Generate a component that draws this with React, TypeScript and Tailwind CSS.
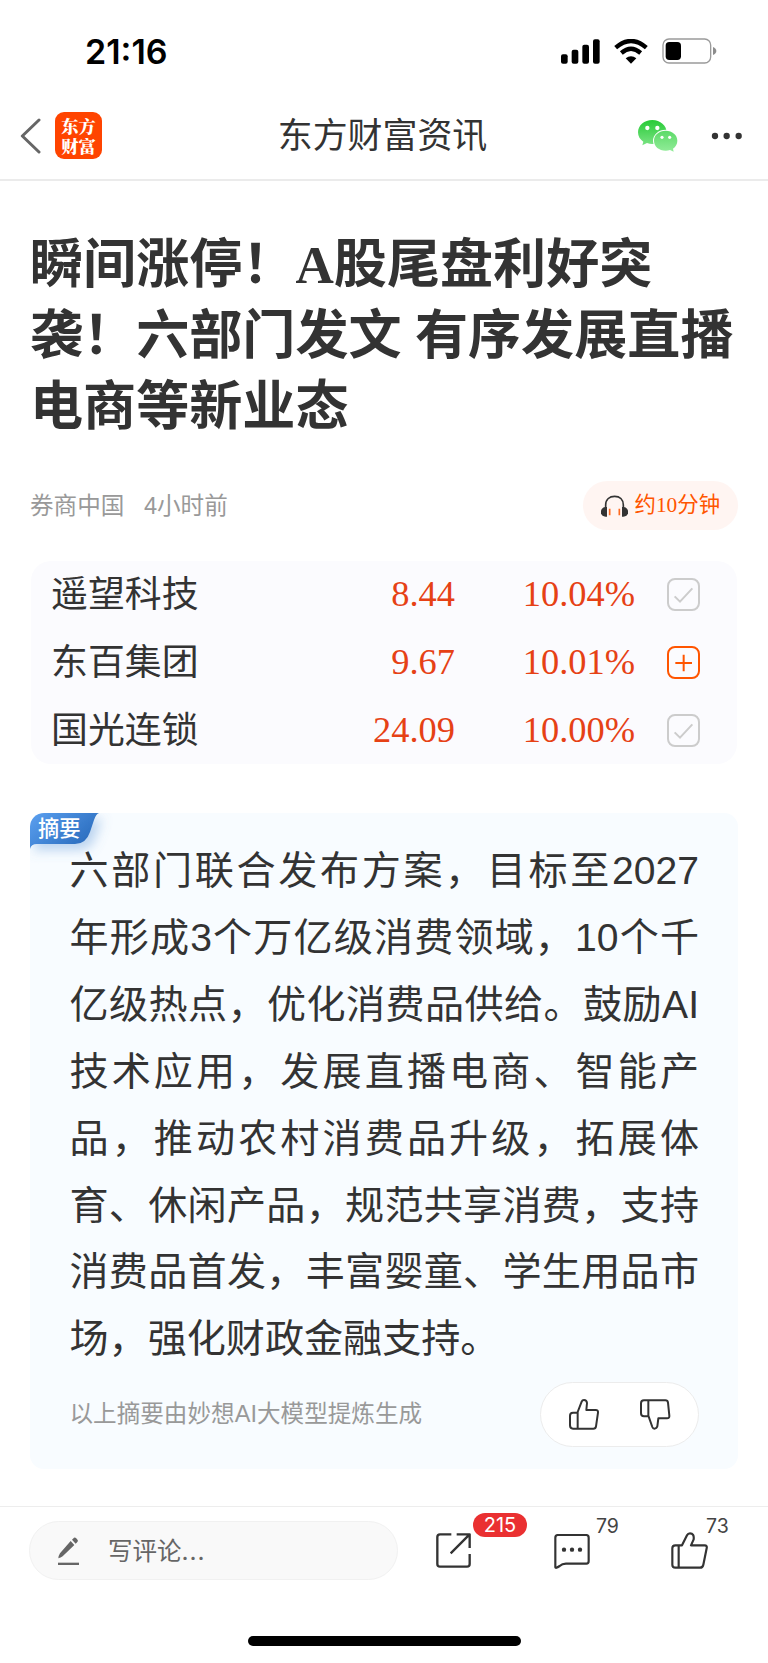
import { clsx } from "clsx";

const stocks = [
  { name: "遥望科技", price: "8.44", change: "10.04%", added: true },
  { name: "东百集团", price: "9.67", change: "10.01%", added: false },
  { name: "国光连锁", price: "24.09", change: "10.00%", added: true },
];

const titleLines = [
  "瞬间涨停！A股尾盘利好突",
  "袭！六部门发文 有序发展直播",
  "电商等新业态",
];

const summaryLines = [
  "六部门联合发布方案，目标至2027",
  "年形成3个万亿级消费领域，10个千",
  "亿级热点，优化消费品供给。鼓励AI",
  "技术应用，发展直播电商、智能产",
  "品，推动农村消费品升级，拓展体",
  "育、休闲产品，规范共享消费，支持",
  "消费品首发，丰富婴童、学生用品市",
  "场，强化财政金融支持。",
];

const sans = "font-['Liberation_Sans','Noto_Sans_CJK_SC',sans-serif]";
const serif = "font-['Liberation_Serif','Noto_Sans_CJK_SC',serif]";
const inter = "font-['Inter','Noto_Sans_CJK_SC',sans-serif]";

function StatusBar() {
  return (
    <div className="flex h-[92px] items-center justify-between pt-[10px] pr-[51px] pl-[85px]">
      <span className={clsx(inter, "pt-px text-[34px] leading-none font-semibold text-black")}>
        21:16
      </span>
      <div className="flex items-center">
        <svg className="mr-[14px] h-[25px] w-[39px]" viewBox="0 0 117 75">
          <rect x="0" y="46" width="20" height="28" rx="6" />
          <rect x="32" y="32" width="20" height="42" rx="6" />
          <rect x="64" y="17" width="20" height="57" rx="6" />
          <rect x="96" y="1" width="20" height="73" rx="6" />
        </svg>
        <svg className="mr-[14px] h-[25px] w-[34px]" viewBox="0 0 102 75">
          <path
            d="M5 26Q51 -14 97 26M22 42Q51 17 80 42"
            fill="none"
            stroke="#000"
            strokeWidth="13"
          />
          <path d="M35 58Q51 46 67 58L51 74Z" />
        </svg>
        <svg className="h-[26px] w-[55px]" viewBox="0 0 165 78">
          <rect x="3" y="3" width="143" height="72" rx="18" fill="none" stroke="#9a9a9a" strokeWidth="4" />
          <rect x="11" y="12" width="46" height="54" rx="11" />
          <path d="M153 27Q163 31 163 39T153 51Z" fill="#8c8c8c" />
        </svg>
      </div>
    </div>
  );
}

function WechatIcon() {
  return (
    <svg className="h-8 w-10" viewBox="0 0 120 96">
      <defs>
        <linearGradient id="wechat-back" x1="0" y1="0" x2="0" y2="1">
          <stop offset="0" stopColor="#28cb37" />
          <stop offset="1" stopColor="#7be384" />
        </linearGradient>
        <linearGradient id="wechat-front" x1="0" y1="0" x2="0" y2="1">
          <stop offset="0" stopColor="#5cda68" />
          <stop offset="1" stopColor="#92ec99" />
        </linearGradient>
      </defs>
      <path
        d="M43 0C19 0 0 16 0 37c0 12 6 22 16 28l-3 11 14-7c5 2 10 3 16 3 24 0 43-15 43-35S67 0 43 0Z"
        fill="url(#wechat-back)"
      />
      <ellipse cx="83" cy="62" rx="38" ry="33" fill="#fff" />
      <path
        d="M83 32C63 32 48 45 48 62s15 30 35 30c5 0 9-1 13-2l11 5-2-9c8-6 13-14 13-24 0-17-15-30-35-30Z"
        fill="url(#wechat-front)"
      />
      <g fill="#fff">
        <circle cx="28" cy="24" r="6.5" />
        <circle cx="58" cy="24" r="6.5" />
        <circle cx="72" cy="52" r="4.7" />
        <circle cx="95" cy="52" r="4.7" />
      </g>
    </svg>
  );
}

function Header() {
  return (
    <header className="grid h-[89px] grid-cols-[1fr_auto_1fr] items-center border-b-2 border-[#ebebeb] pr-[26px] pl-5">
      <div className="flex items-center">
        <svg className="h-9 w-[21px]" viewBox="0 0 63 108" fill="none">
          <path d="M57 6L7 54L57 102" stroke="#666" strokeWidth="9" strokeLinecap="round" strokeLinejoin="round" />
        </svg>
        <div className="ml-[14px] flex h-[47px] w-[47px] flex-col items-center justify-center rounded-[9px] bg-[#ff4400] font-['Noto_Serif_CJK_SC','Noto_Sans_CJK_SC',serif] text-[17.3px] leading-5 font-black text-white">
          <span>东方</span>
          <span>财富</span>
        </div>
      </div>
      <h1 className={clsx(sans, "pt-[2px] pl-[3px] text-[34.9px] leading-none text-[#333]")}>东方财富资讯</h1>
      <div className="flex items-center justify-end gap-[33px]">
        <WechatIcon />
        <svg className="h-2 w-[31px]" viewBox="0 0 93 24" fill="#333">
          <circle cx="12" cy="12" r="9.5" />
          <circle cx="47" cy="12" r="9.5" />
          <circle cx="83" cy="12" r="9.5" />
        </svg>
      </div>
    </header>
  );
}

function HeadphonesIcon() {
  return (
    <svg className="h-[22px] w-[27px]" viewBox="0 0 81 66">
      <path d="M14 38V30C14 13 26 4 41 4S67 13 67 30V38" fill="none" stroke="#333" strokeWidth="5" />
      <path d="M18 36V65H14A14 14 0 0 1 14 36Z" fill="#333" />
      <path d="M63 36V65H67A14 14 0 0 0 67 36Z" fill="#333" />
      <path d="M26 41V61M55 41V61" stroke="#ff6a1f" strokeWidth="5" />
    </svg>
  );
}

function StockToggle({ added }: { added: boolean }) {
  return (
    <svg
      className={clsx("h-[33px] w-[33px]", added ? "text-[#ccc]" : "text-[#ff5500]")}
      viewBox="0 0 99 99"
      fill="none"
      stroke="currentColor"
      strokeWidth="6"
    >
      <rect x="3" y="3" width="93" height="93" rx="21" />
      {added ? <path d="M23 55L39 71L76 31" /> : <path d="M50 26V76M25 51H75" />}
    </svg>
  );
}

function StockList() {
  return (
    <div className="mx-px mt-[31px] flex h-[203px] flex-col gap-1 rounded-[20px] bg-[#fbfbfe] pt-px">
      {stocks.map((stock) => (
        <div
          key={stock.name}
          className="grid h-16 grid-cols-[1fr_150px_180px_65px] items-center pr-[37px] pl-5 text-[36.9px] leading-none"
        >
          <span className={clsx(sans, "pt-[2px] text-[#333]")}>{stock.name}</span>
          <span className={clsx(serif, "pt-px text-right text-[36.4px] text-[#e64115]")}>{stock.price}</span>
          <span className={clsx(serif, "pt-px text-right text-[36.4px] text-[#e64115]")}>{stock.change}</span>
          <span className="flex justify-end">
            <StockToggle added={stock.added} />
          </span>
        </div>
      ))}
    </div>
  );
}

function ThumbUpIcon() {
  return (
    <svg className="h-[31px] w-[31px]" viewBox="0 0 93 93" fill="none" stroke="#333" strokeWidth="6" strokeLinejoin="round">
      <path d="M25 41H12Q3 41 3 50V79Q3 89 12 89H73Q80 89 81 82L87 41Q88 33 80 33H52L54 12Q53 3 45 3Q40 3 38 8L26 39V88" />
    </svg>
  );
}

function ThumbDownIcon() {
  return (
    <svg className="h-[31px] w-[31px]" viewBox="0 0 93 93" fill="none" stroke="#333" strokeWidth="6" strokeLinejoin="round">
      <path d="M26 52H12Q3 52 3 43V13Q3 4 12 4H76Q83 4 84 11L88 50Q89 58 81 58H55L52 82Q50 89 43 89Q39 89 37 84L25 50V5" />
    </svg>
  );
}

function SummaryBadge() {
  return (
    <div className="absolute top-0 left-0 h-[60px] w-[110px]">
      <svg className="absolute inset-0 h-full w-full" viewBox="0 0 110 60">
        <defs>
          <linearGradient id="badge-fill" x1="0" y1="0" x2="1" y2="0.6">
            <stop offset="0" stopColor="#5ba0f0" />
            <stop offset="1" stopColor="#2a6cbd" />
          </linearGradient>
          <filter id="badge-shadow" x="-20%" y="-20%" width="150%" height="190%">
            <feDropShadow dx="5" dy="6" stdDeviation="6" floodColor="#5b95d8" floodOpacity="0.4" />
          </filter>
        </defs>
        <path
          d="M0 12Q0 0 12 0H69Q66 1 64 7L60 19Q56 31 45 31H7Q1 31 0 36Z"
          fill="url(#badge-fill)"
          filter="url(#badge-shadow)"
        />
      </svg>
      <span className={clsx(sans, "relative block pt-[5px] pl-2 text-[21.3px] leading-[22px] font-medium text-white")}>
        摘要
      </span>
    </div>
  );
}

function Summary() {
  return (
    <section className="relative mt-[49px] h-[656px] overflow-hidden rounded-[14px] bg-[#f8fcff] pt-[25px] pr-[39px] pl-[39.5px]">
      <SummaryBadge />
      <div className={clsx(sans, "relative text-[39.1px] leading-[66.9px] text-[#333]")}>
        {summaryLines.map((line, i) => (
          <p
            key={line}
            className={clsx(
              "whitespace-nowrap",
              i < summaryLines.length - 1 && "[text-align-last:justify]",
            )}
          >
            {line}
          </p>
        ))}
      </div>
      <div className="mt-[9px] flex items-center justify-between">
        <span className={clsx(sans, "pt-px text-[23.6px] leading-none text-[#999]")}>
          以上摘要由妙想AI大模型提炼生成
        </span>
        <div className="flex h-[65px] w-[159px] items-center justify-center gap-10 rounded-full border border-[#ececec] bg-white">
          <ThumbUpIcon />
          <ThumbDownIcon />
        </div>
      </div>
    </section>
  );
}

function BottomBar() {
  return (
    <footer className="mt-[37px] h-[157px] border-t border-[#ededed] pt-[14px]">
      <div className="flex h-[59px] items-center pr-[59px] pl-[29px]">
        <div className="flex h-[59px] w-[369px] items-center rounded-full border border-[#f1f1f1] bg-[#f9f9f9] pl-7">
          <svg className="h-[29px] w-[21px]" viewBox="0 0 63 87" fill="#666">
            <path d="M38 15L49 27L14 61Q8 66 1 67Q2 58 6 52ZM42 11L48 5Q51 3 54 6L59 12Q61 15 58 18L53 23Z" />
            <path d="M0 80H63V87H0Z" />
          </svg>
          <span className={clsx(inter, "ml-[29px] pt-px text-[24.5px] leading-none text-[#666]")}>
            写评论<span className="tracking-[1px]">...</span>
          </span>
        </div>
        <div className="relative ml-[38px]">
          <svg className="h-[35px] w-[35px]" viewBox="0 0 105 105" fill="none" stroke="#333" strokeWidth="7" strokeLinejoin="round">
            <path d="M46 4H12Q4 4 4 12V93Q4 101 12 101H93Q101 101 101 93V63M62 4H101V45M100 5L44 61" />
          </svg>
          <span className={clsx(inter, "absolute -top-[20px] left-[37px] flex h-[24px] w-[54px] items-center justify-center rounded-full bg-[#ea3031] text-[20px] leading-none text-white")}>
            215
          </span>
        </div>
        <div className="relative ml-[83px]">
          <svg className="h-[36px] w-[36px]" viewBox="0 0 108 108" fill="none" stroke="#333" strokeWidth="6.5" strokeLinejoin="round">
            <path d="M4 102V14Q4 6 11 6H97Q104 6 104 14V84Q104 92 97 92H36Q24 92 17 99Q4 108 4 102Z" />
            <g fill="#333" stroke="none">
              <circle cx="30" cy="50" r="6.5" />
              <circle cx="54" cy="50" r="6.5" />
              <circle cx="78" cy="50" r="6.5" />
            </g>
          </svg>
          <span className={clsx(inter, "absolute -top-[16px] left-[42px] text-[19.5px] leading-none text-[#444]")}>
            79
          </span>
        </div>
        <div className="relative ml-[81px]">
          <svg className="h-[37px] w-[37px]" viewBox="0 0 111 111" fill="none" stroke="#333" strokeWidth="6.5" strokeLinejoin="round">
            <path d="M24 107H13Q4 107 4 98V49Q4 40 13 40H33L48 10Q51 4 57 4Q70 4 68 22L60 40H101Q109 40 107 49L97 98Q95 107 87 107H23V41" />
          </svg>
          <span className={clsx(inter, "absolute -top-[15px] left-[35px] text-[19.5px] leading-none text-[#444]")}>
            73
          </span>
        </div>
      </div>
      <div className="mx-auto mt-[56px] h-[10px] w-[273px] rounded-full bg-black" />
    </footer>
  );
}

export default function App() {
  return (
    <div className="h-[1663px] w-[768px] overflow-hidden bg-white">
      <StatusBar />
      <Header />
      <main className="px-[30px] pt-[49px]">
        <h2 className={clsx(serif, "text-[53.1px] leading-[71px] font-bold whitespace-nowrap text-[#333]")}>
          {titleLines.map((line) => (
            <span key={line} className="block">
              {line}
            </span>
          ))}
        </h2>
        <div className="mt-[38px] flex h-[49px] items-center justify-between">
          <div className={clsx(sans, "flex gap-[19.5px] pt-[2px] text-[23.6px] leading-none text-[#999]")}>
            <span>券商中国</span>
            <span>4小时前</span>
          </div>
          <div className="flex h-[49px] w-[155px] items-center gap-[7px] rounded-full bg-[#fff5f2] pl-[17.5px]">
            <HeadphonesIcon />
            <span className={clsx(serif, "text-[21.4px] leading-none text-[#ff5500]")}>约10分钟</span>
          </div>
        </div>
        <StockList />
        <Summary />
      </main>
      <BottomBar />
    </div>
  );
}
